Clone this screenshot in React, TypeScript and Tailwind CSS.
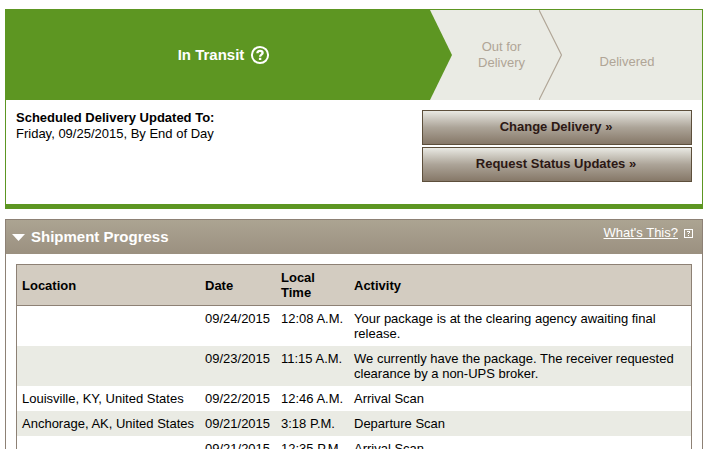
import { useState } from "react";

type ScanEvent = {
  location: string;
  date: string;
  time: string;
  activity: string;
};

const events: ScanEvent[] = [
  {
    location: "",
    date: "09/24/2015",
    time: "12:08 A.M.",
    activity: "Your package is at the clearing agency awaiting final release.",
  },
  {
    location: "",
    date: "09/23/2015",
    time: "11:15 A.M.",
    activity: "We currently have the package. The receiver requested clearance by a non-UPS broker.",
  },
  { location: "Louisville, KY, United States", date: "09/22/2015", time: "12:46 A.M.", activity: "Arrival Scan" },
  { location: "Anchorage, AK, United States", date: "09/21/2015", time: "3:18 P.M.", activity: "Departure Scan" },
  { location: "", date: "09/21/2015", time: "12:35 P.M.", activity: "Arrival Scan" },
];

const actions = ["Change Delivery »", "Request Status Updates »"];

function HelpCircle() {
  return (
    <svg viewBox="0 0 20 20" className="size-5" fill="none" stroke="#fff" aria-hidden="true">
      <circle cx="10" cy="10" r="8.1" strokeWidth="2" />
      <path d="M7.4 8.3C7.4 6.7 8.6 5.9 10 5.9s2.6.8 2.6 2.1c0 1.7-2.5 1.7-2.5 3.7" strokeWidth="2.3" />
      <path d="M8.9 12.8h2.4v2.2H8.9z" fill="#fff" stroke="none" />
    </svg>
  );
}

function HelpBox() {
  return (
    <svg viewBox="0 0 9 9" className="size-[9px]" fill="none" aria-hidden="true" shapeRendering="crispEdges">
      <rect x="0.5" y="0.5" width="8" height="8" stroke="#fff" />
      <path d="M3 2h3v1H3zM5 3h1v1H5zM4 4h1v1H4zM4 6h1v1H4z" fill="#fff" />
    </svg>
  );
}

function StatusBar() {
  return (
    <ol className="flex h-[90px] bg-[#eaebe4] text-[#b0a596]">
      <li className="flex flex-1 items-center justify-center gap-[6px] bg-[#5d9622] pl-3 text-[15px] font-bold text-white">
        In Transit
        <button type="button" aria-label="Help">
          <HelpCircle />
        </button>
      </li>
      <li className="flex">
        <svg viewBox="0 0 22 90" className="h-full w-[22px]" preserveAspectRatio="none" aria-hidden="true">
          <path d="M0 0L22 45L0 90z" fill="#5d9622" />
        </svg>
        <span className="flex w-[87px] items-center justify-center pl-3 text-center">
          Out for
          <br />
          Delivery
        </span>
      </li>
      <li className="flex">
        <svg viewBox="0 0 23 90" className="h-full w-[23px]" preserveAspectRatio="none" fill="none" aria-hidden="true">
          <path d="M0 0L22.5 45L0 90" stroke="#b0a596" strokeWidth="1.2" />
        </svg>
        <span className="flex w-[140px] items-center justify-center pt-[14px] pr-[10px]">Delivered</span>
      </li>
    </ol>
  );
}

function DeliverySummary() {
  return (
    <section className="border border-b-[5px] border-[#5d9622]">
      <StatusBar />
      <div className="flex items-start justify-between px-[10px] pt-[10px] pb-[22px]">
        <p>
          <strong>Scheduled Delivery Updated To:</strong>
          <br />
          Friday, 09/25/2015, By End of Day
        </p>
        <div className="flex w-[270px] flex-col gap-[2px]">
          {actions.map((label) => (
            <button
              key={label}
              type="button"
              className="h-[35px] border border-[#5d4f3b] bg-linear-to-b from-[#e9e9e3] via-[#aca498] to-[#867868] pr-[2px] pb-[2px] font-bold text-[#2c1814]"
            >
              {label}
            </button>
          ))}
        </div>
      </div>
    </section>
  );
}

function ShipmentProgress() {
  const [open, setOpen] = useState(true);

  return (
    <section className="border border-[#8d8175]">
      <div className="flex h-[34px] items-center justify-between bg-linear-to-b from-[#aca492] to-[#9b9080] pr-[9px] pl-[6px] text-white">
        <h2>
          <button
            type="button"
            aria-expanded={open}
            onClick={() => setOpen(!open)}
            className="flex items-center gap-[6px] text-[15px] font-bold"
          >
            <svg viewBox="0 0 13 7" className={open ? "h-[7px] w-[13px]" : "h-[7px] w-[13px] -rotate-90"} aria-hidden="true">
              <path d="M0 0h13L6.5 7z" fill="#fff" />
            </svg>
            Shipment Progress
          </button>
        </h2>
        <a href="#help" className="flex items-center gap-[6px] pb-2">
          <span className="underline underline-offset-1">What's This?</span>
          <HelpBox />
        </a>
      </div>
      {open && (
        <div className="p-[10px]">
          <table className="w-full table-fixed border-separate border-spacing-0 border border-[#8d8175] text-left leading-[15px]">
            <thead className="bg-[#d3ccc1]">
              <tr>
                <th className="w-[183px] border-b border-[#8d8175] p-[5px]">Location</th>
                <th className="w-[76px] border-b border-[#8d8175] p-[5px]">Date</th>
                <th className="w-[73px] border-b border-[#8d8175] p-[5px]">
                  Local
                  <br />
                  Time
                </th>
                <th className="border-b border-[#8d8175] p-[5px]">Activity</th>
              </tr>
            </thead>
            <tbody className="align-top">
              {events.map((event, index) => (
                <tr key={index} className="even:bg-[#eaebe4]">
                  <td className="p-[5px] whitespace-nowrap">{event.location}</td>
                  <td className="p-[5px]">{event.date}</td>
                  <td className="p-[5px] whitespace-nowrap">{event.time}</td>
                  <td className="p-[5px]">{event.activity}</td>
                </tr>
              ))}
            </tbody>
          </table>
        </div>
      )}
    </section>
  );
}

export default function App() {
  return (
    <main className="flex flex-col gap-[10px] bg-white pt-[9px] pr-[6px] pl-[5px] font-['Liberation_Sans',Arial,sans-serif] text-[13px] leading-4 text-black">
      <DeliverySummary />
      <ShipmentProgress />
    </main>
  );
}
